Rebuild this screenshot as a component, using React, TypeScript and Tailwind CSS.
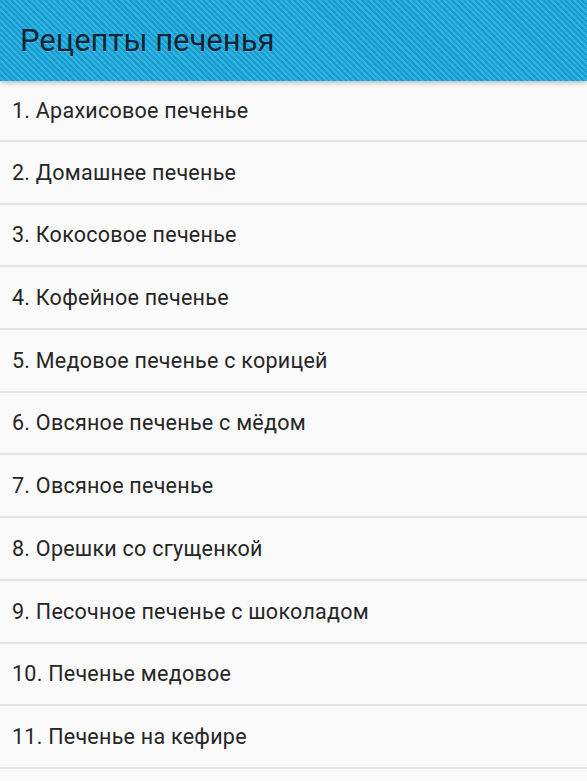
import React from "react"

const recipes = [
	"1. Арахисовое печенье",
	"2. Домашнее печенье",
	"3. Кокосовое печенье",
	"4. Кофейное печенье",
	"5. Медовое печенье с корицей",
	"6. Овсяное печенье с мёдом",
	"7. Овсяное печенье",
	"8. Орешки со сгущенкой",
	"9. Песочное печенье с шоколадом",
	"10. Печенье медовое",
	"11. Печенье на кефире",
]

export default function App() {
	return (
		<div className="w-[587px] h-[781px] overflow-hidden bg-[#fafafa] font-['Roboto',sans-serif]">
			{/* Action bar with diagonal stripes */}
			<div className="relative z-10 h-[81px] flex items-center pl-[20px] bg-[#179dd1] bg-[repeating-linear-gradient(45deg,#169dd1_0px,#169dd1_2px,#33b2e0_2px,#33b2e0_4px)] shadow-[0_2px_5px_rgba(0,0,0,0.25)]">
				<h1 className="text-[31px] leading-none text-[#0b2535] [text-shadow:0_1px_1px_rgba(255,255,255,0.15)]">
					Рецепты печенья
				</h1>
			</div>

			{/* Recipe list */}
			<ul>
				{recipes.map((name, i) => (
					<li
						key={name}
						className={`${i === 0 ? "h-[61px]" : "h-[62.7px]"} box-border flex items-center pl-[12px] pt-[1px] border-b-2 border-[#e4e4e4] text-[21.5px] tracking-[0.25px] text-[#262626]`}
					>
						{name}
					</li>
				))}
			</ul>
		</div>
	)
}
